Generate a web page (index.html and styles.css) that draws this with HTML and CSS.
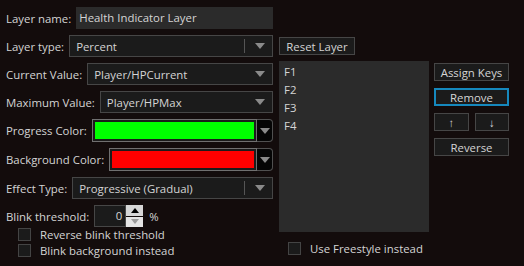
FILE: index.html
```html
<!DOCTYPE html>
<html lang="en">
<head>
    <meta charset="UTF-8">
    <title>Layer</title>
    <link rel="stylesheet" href="styles.css">
</head>
<body>
    <div class="window">
        <!-- left side: layer settings -->
        <div class="settings">
            <div class="row">
                <span class="label">Layer name:</span>
                <div class="textbox">Health Indicator Layer</div>
            </div>
            <div class="row">
                <span class="label">Layer type:</span>
                <div class="combo split"><span>Percent</span><i class="sep"></i><i class="arrow"></i></div>
            </div>
            <div class="row">
                <span class="label">Current Value:</span>
                <div class="combo"><span>Player/HPCurrent</span><i class="arrow"></i></div>
            </div>
            <div class="row">
                <span class="label">Maximum Value:</span>
                <div class="combo"><span>Player/HPMax</span><i class="arrow"></i></div>
            </div>
            <div class="row tall">
                <span class="label">Progress Color:</span>
                <div class="color"><div class="swatch green"></div><div class="drop"><i class="arrow"></i></div></div>
            </div>
            <div class="row tall">
                <span class="label">Background Color:</span>
                <div class="color"><div class="swatch red"></div><div class="drop"><i class="arrow"></i></div></div>
            </div>
            <div class="row">
                <span class="label">Effect Type:</span>
                <div class="combo split"><span>Progressive (Gradual)</span><i class="sep"></i><i class="arrow"></i></div>
            </div>
            <div class="row">
                <span class="label">Blink threshold:</span>
                <div class="spin">
                    <div class="spin-value">0</div>
                    <div class="spin-btns">
                        <div class="spin-up"><i></i></div>
                        <div class="spin-down"><i></i></div>
                    </div>
                </div>
                <span class="unit">%</span>
            </div>
            <div class="checks">
                <label class="check"><span class="box"></span>Reverse blink threshold</label>
                <label class="check"><span class="box"></span>Blink background instead</label>
            </div>
        </div>

        <!-- right side: keys -->
        <div class="keys">
            <button class="btn reset">Reset Layer</button>
            <div class="keys-main">
                <ul class="key-list">
                    <li>F1</li>
                    <li>F2</li>
                    <li>F3</li>
                    <li>F4</li>
                </ul>
                <div class="key-buttons">
                    <button class="btn">Assign Keys</button>
                    <button class="btn active">Remove</button>
                    <div class="updown">
                        <button class="btn">↑</button>
                        <button class="btn">↓</button>
                    </div>
                    <button class="btn">Reverse</button>
                </div>
            </div>
            <label class="check freestyle"><span class="box"></span>Use Freestyle instead</label>
        </div>
    </div>
</body>
</html>
```

FILE: styles.css
```css
body {
    margin: 0;
    background-color: #130c0c;
    color: #d4d4d4;
    font-family: "Open Sans", "Liberation Sans", sans-serif;
    font-size: 11.4px;
}

.window {
    display: flex;
    width: 524px;
    height: 266px;
}

.settings {
    width: 267px;
    padding: 7px 0 0 6px;
    display: flex;
    flex-direction: column;
    gap: 6px;
}

.row {
    display: flex;
    align-items: center;
    height: 22px;
}

.row.tall {
    height: 23px;
}

.label {
    white-space: nowrap;
    margin-right: 5px;
}

.textbox {
    flex: 1;
    height: 22px;
    line-height: 21px;
    background-color: #2b2b2b;
    padding-left: 3px;
}

.combo {
    flex: 1;
    height: 22px;
    box-sizing: border-box;
    border: 1px solid #464646;
    background-color: #1b1b1b;
    display: flex;
    align-items: center;
    padding: 0 7px 0 6px;
}

.combo span {
    flex: 1;
}

.combo .sep {
    width: 1px;
    height: 14px;
    background-color: #555;
    margin-right: 10px;
}

.arrow {
    width: 0;
    height: 0;
    border-left: 5px solid transparent;
    border-right: 5px solid transparent;
    border-top: 6px solid #8a8a8a;
}

.color {
    flex: 1;
    display: flex;
    height: 23px;
}

.swatch {
    flex: 1;
    border: 1px solid #707070;
    box-shadow: inset 0 0 0 2px #1b1b1b;
}

.swatch.green {
    background-color: #00ff00;
}

.swatch.red {
    background-color: #ff0000;
}

.drop {
    width: 16px;
    box-sizing: border-box;
    background-color: #050505;
    border: 1px solid #505050;
    border-left: none;
    border-radius: 0 4px 4px 0;
    display: flex;
    align-items: center;
    justify-content: center;
}

.spin {
    display: flex;
    height: 22px;
}

.spin-value {
    width: 32px;
    box-sizing: border-box;
    border: 1px solid #464646;
    background-color: #1b1b1b;
    text-align: right;
    padding-right: 3px;
    line-height: 20px;
}

.spin-btns {
    width: 17px;
    display: flex;
    flex-direction: column;
    gap: 1px;
}

.spin-up,
.spin-down {
    flex: 1;
    display: flex;
    align-items: center;
    justify-content: center;
}

.spin-up {
    background-color: #d6d6d6;
}

.spin-down {
    background-color: #e4e4e4;
}

.spin-up i {
    border-left: 4px solid transparent;
    border-right: 4px solid transparent;
    border-bottom: 5px solid #000;
}

.spin-down i {
    border-left: 4px solid transparent;
    border-right: 4px solid transparent;
    border-top: 5px solid #9a9a9a;
}

.unit {
    margin-left: 6px;
}

.checks {
    display: flex;
    flex-direction: column;
    gap: 3px;
    padding-left: 12px;
    margin-top: -5px;
}

.check {
    display: flex;
    align-items: center;
    height: 13px;
}

.box {
    width: 11px;
    height: 11px;
    border: 1px solid #444;
    background-color: #1b1b1b;
    margin-right: 9px;
}

.keys {
    padding: 37px 0 0 6px;
    display: flex;
    flex-direction: column;
}

.btn {
    font-family: inherit;
    font-size: 11.4px;
    color: #d4d4d4;
    background-color: #1b1b1b;
    border: 1px solid #464646;
    height: 18px;
    padding: 0;
    line-height: 15px;
}

.btn.reset {
    width: 76px;
    align-self: flex-start;
}

.btn.active {
    border: 2px solid #1688bd;
}

.keys-main {
    display: flex;
    gap: 5px;
    margin-top: 6px;
}

.key-list {
    list-style: none;
    margin: 0;
    padding: 2px 0 0 5px;
    width: 145px;
    height: 169px;
    background-color: #2b2b2b;
}

.key-list li {
    height: 18px;
    line-height: 18px;
}

.key-buttons {
    width: 75px;
    display: flex;
    flex-direction: column;
    gap: 7px;
    padding-top: 2px;
}

.updown {
    display: flex;
    gap: 6px;
}

.updown .btn {
    flex: 1;
}

.freestyle {
    margin: 10px 0 0 9px;
}
```
